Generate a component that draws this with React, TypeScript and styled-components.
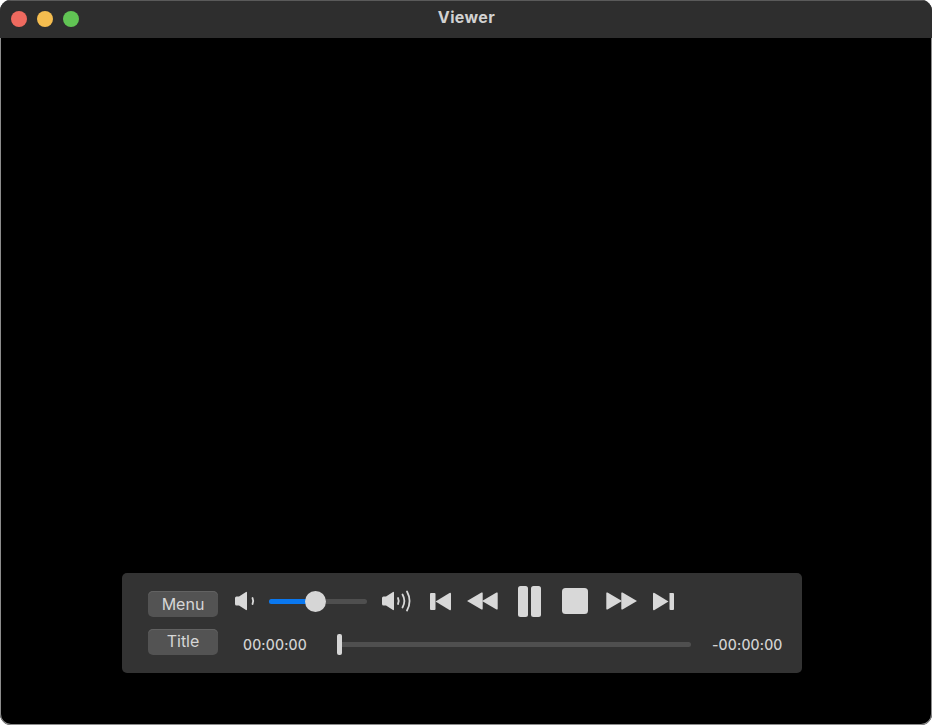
import React from "react";
import styled, { createGlobalStyle } from "styled-components";

const Global = createGlobalStyle`
  html, body { margin: 0; padding: 0; background: #fff; }
  body { width: 934px; height: 726px; overflow: hidden; font-family: "Inter", "Liberation Sans", sans-serif; }
`;

const Win = styled.div`
  width: 932px;
  height: 725px;
  box-sizing: border-box;
  display: flex;
  flex-direction: column;
  background: #000;
  border-radius: 11px;
  overflow: hidden;
  box-shadow: inset 0 0 0 1px #8c8c8c;
`;

const TitleBar = styled.div`
  position: relative;
  height: 38px;
  flex: none;
  display: flex;
  align-items: center;
  gap: 10px;
  padding-left: 11px;
  box-sizing: border-box;
  background: #2e2e2e;
  border-top: 1px solid #5a5a5a;
`;

const Light = styled.span<{ $c: string }>`
  width: 16px;
  height: 16px;
  border-radius: 50%;
  background: ${(p) => p.$c};
  margin-top: -1px;
`;

const WinTitle = styled.div`
  position: absolute;
  left: 0;
  right: 0;
  top: 7px;
  text-align: center;
  color: #d2d2d2;
  font: 700 16px/19px "Inter", "Liberation Sans", sans-serif;
  letter-spacing: 0.4px;
  padding-left: 1px;
`;

const Stage = styled.div`
  flex: 1;
  display: flex;
  align-items: flex-end;
  padding: 0 0 52px 122px;
`;

const Controller = styled.div`
  width: 680px;
  height: 100px;
  box-sizing: border-box;
  background: #333333;
  border-radius: 5px;
  padding: 18px 20px 0 26px;
  display: flex;
  flex-direction: column;
  gap: 12px;
`;

const Row = styled.div`
  display: flex;
  align-items: center;
  height: 26px;
`;

const Btn = styled.div<{ $up?: boolean }>`
  width: 70px;
  height: 26px;
  flex: none;
  box-sizing: border-box;
  border-radius: 5px;
  background: #535353;
  box-shadow: inset 0 1px 0 #626262;
  color: #d6d6d6;
  font-size: 16px;
  font-weight: 400;
  line-height: ${(p) => (p.$up ? "24px" : "26px")};
  text-align: center;
`;

const Icon = styled.svg<{ $ml: number }>`
  display: block;
  flex: none;
  margin-left: ${(p) => p.$ml}px;
  margin-bottom: 6px;
  fill: #d8d8d8;
`;

const VolTrack = styled.div`
  position: relative;
  width: 98px;
  height: 5px;
  margin: 0 0 6px 14px;
  flex: none;
  border-radius: 3px;
  background: #4f4f4f;
`;

const VolFill = styled.div`
  width: 47px;
  height: 100%;
  border-radius: 3px;
  background: #0a78f0;
`;

const VolKnob = styled.div`
  position: absolute;
  left: 36px;
  top: -8px;
  width: 21px;
  height: 21px;
  border-radius: 50%;
  background: #d6d6d6;
`;

const Time = styled.div<{ $w: number; $ml: number }>`
  width: ${(p) => p.$w}px;
  margin-left: ${(p) => p.$ml}px;
  flex: none;
  color: #d2d2d2;
  font-size: 14px;
  font-weight: 500;
  letter-spacing: 0.15px;
  line-height: 18px;
  white-space: nowrap;
  padding-top: 5px;
`;

const SeekTrack = styled.div`
  position: relative;
  width: 354px;
  height: 5px;
  margin: 5px 0 0 30px;
  flex: none;
  border-radius: 3px;
  background: #4f4f4f;
`;

const SeekKnob = styled.div`
  position: absolute;
  left: 0;
  top: -8px;
  width: 5px;
  height: 21px;
  border-radius: 2px;
  background: #d6d6d6;
`;

export default function App() {
  return (
    <>
      <Global />
      <Win>
        <TitleBar>
          <Light $c="#ee6a5f" />
          <Light $c="#f5bd4f" />
          <Light $c="#61c454" />
          <WinTitle>Viewer</WinTitle>
        </TitleBar>
        <Stage>
          <Controller>
            <Row>
              <Btn>Menu</Btn>
              <Icon $ml={16} width="21" height="20" viewBox="0 0 21 20">
                <path d="M2.500 5.500h2.500L12 1a.6.6 0 0 1 1 .5v17a.6.6 0 0 1-1 .5l-7-4.500H2.500a1.500 1.500 0 0 1-1.500-1.500v-6a1.500 1.500 0 0 1 1.500-1.500z" />
                <path d="M18.500 7a7 7 0 0 1 0 6" fill="none" stroke="#d8d8d8" strokeWidth="1.800" strokeLinecap="round" />
              </Icon>
              <VolTrack>
                <VolFill />
                <VolKnob />
              </VolTrack>
              <Icon $ml={14} width="30" height="22" viewBox="0 0 30 22">
                <path d="M2.500 6.500h2.500L12 2a.6.6 0 0 1 1 .5v17a.6.6 0 0 1-1 .5l-7-4.500H2.500a1.500 1.500 0 0 1-1.500-1.500v-6a1.500 1.500 0 0 1 1.500-1.500z" />
                <g fill="none" stroke="#d8d8d8" strokeWidth="1.800" strokeLinecap="round">
                  <path d="M17 8a7 7 0 0 1 0 6" />
                  <path d="M21.500 4.500a13 13 0 0 1 0 13" />
                  <path d="M26 1.500a20 20 0 0 1 0 19" />
                </g>
              </Icon>
              <Icon $ml={19} width="21" height="19" viewBox="0 0 21 19">
                <path d="M1 1h3.500a1 1 0 0 1 1 1v15a1 1 0 0 1-1 1H1a1 1 0 0 1-1-1V2a1 1 0 0 1 1-1z" />
                <path d="M5.500 9.500 19.500 1a1 1 0 0 1 1.500.8v15.400a1 1 0 0 1-1.500.8z" />
              </Icon>
              <Icon $ml={16} width="31" height="18" viewBox="0 0 31 18">
                <path d="M0 9 14.500.6a.8.8 0 0 1 1.200.7v15.400a.8.8 0 0 1-1.200.7z" />
                <path d="M15 9 29.500.6a.8.8 0 0 1 1.200.7v15.400a.8.8 0 0 1-1.200.7z" />
              </Icon>
              <Icon $ml={20} width="23" height="31" viewBox="0 0 23 31">
                <rect x="0" y="0" width="10" height="31" rx="2.5" />
                <rect x="13" y="0" width="10" height="31" rx="2.5" />
              </Icon>
              <Icon $ml={21} width="26" height="26" viewBox="0 0 26 26">
                <rect width="26" height="26" rx="3.5" />
              </Icon>
              <Icon $ml={18} width="31" height="18" viewBox="0 0 31 18">
                <path d="M31 9 16.500.6a.8.8 0 0 0-1.200.7v15.400a.8.8 0 0 0 1.200.7z" />
                <path d="M16 9 1.500.6A.8.8 0 0 0 .3 1.300v15.400a.8.8 0 0 0 1.200.7z" />
              </Icon>
              <Icon $ml={16} width="21" height="19" viewBox="0 0 21 19">
                <path d="M16.500 1H20a1 1 0 0 1 1 1v15a1 1 0 0 1-1 1h-2.500a1 1 0 0 1-1-1z" />
                <path d="M15.500 9.500 1.500 1A1 1 0 0 0 0 1.800v15.400a1 1 0 0 0 1.500.8z" />
              </Icon>
            </Row>
            <Row>
              <Btn $up>Title</Btn>
              <Time $w={64} $ml={25}>00:00:00</Time>
              <SeekTrack>
                <SeekKnob />
              </SeekTrack>
              <Time $w={70} $ml={21}>-00:00:00</Time>
            </Row>
          </Controller>
        </Stage>
      </Win>
    </>
  );
}
